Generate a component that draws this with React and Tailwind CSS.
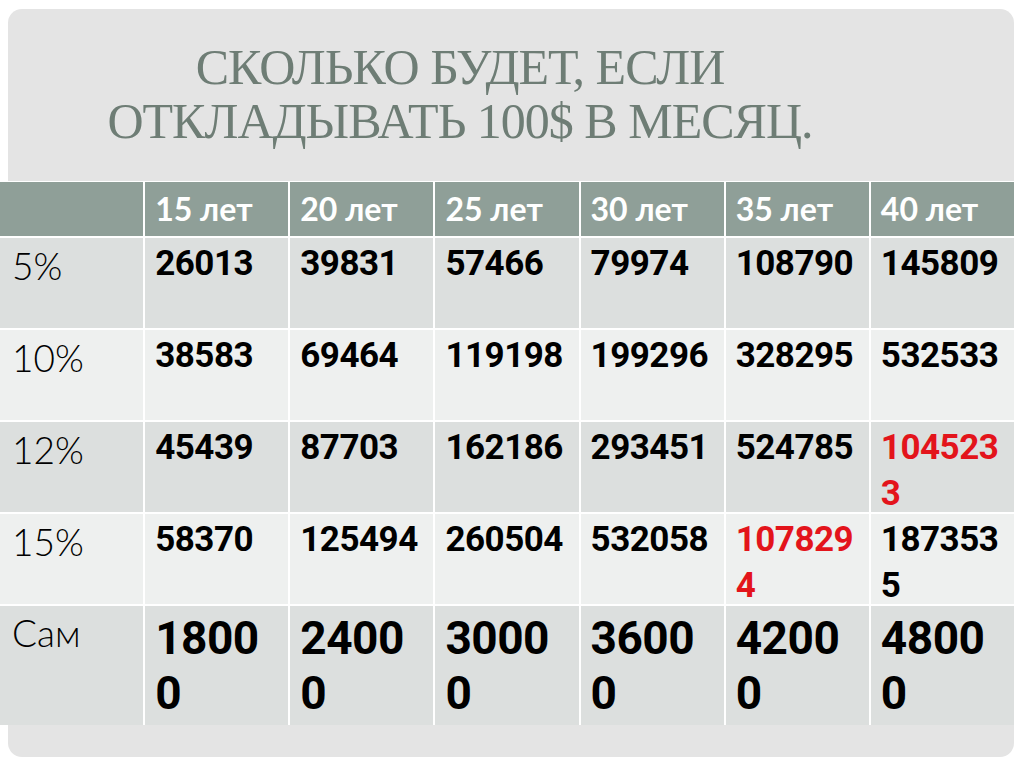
import React from "react";

const years = ["15 лет", "20 лет", "25 лет", "30 лет", "35 лет", "40 лет"];
const rows = [
  { label: "5%", vals: ["26013", "39831", "57466", "79974", "108790", "145809"], red: [], dark: true },
  { label: "10%", vals: ["38583", "69464", "119198", "199296", "328295", "532533"], red: [], dark: false },
  { label: "12%", vals: ["45439", "87703", "162186", "293451", "524785", "1045233"], red: [5], dark: true },
  { label: "15%", vals: ["58370", "125494", "260504", "532058", "1078294", "1873535"], red: [4], dark: false },
];
const sam = ["18000", "24000", "30000", "36000", "42000", "48000"];

export default function App() {
  return (
    <div className="w-[1024px] h-[767px] bg-white overflow-hidden pt-[9px] pl-[8px]">
      <div className="w-[1006px] h-[748px] rounded-[14px] bg-[#e4e4e4] flex flex-col">
        <div className="h-[172px] pr-[102px] pt-[31px] flex flex-col items-center text-[#6e7d75] text-[50px] leading-[54px] tracking-[-1px] font-['Liberation_Serif','DejaVu_Serif',serif]">
          <div>СКОЛЬКО БУДЕТ, ЕСЛИ</div>
          <div>ОТКЛАДЫВАТЬ 100$ В МЕСЯЦ.</div>
        </div>
        <div className="-ml-[8px] w-[1014px] grid grid-cols-7 gap-[2px] bg-white border-t border-white grid-rows-[54px_90px_90px_90px_90px_119px]">
          <div className="bg-[#8f9f98]" />
          {years.map((y) => (
            <div key={y} className="bg-[#8f9f98] text-white text-[32px] font-bold pl-[10px] flex items-center font-['Lato','Open_Sans','Liberation_Sans',sans-serif]">
              {y}
            </div>
          ))}
          {rows.map((r) => (
            <React.Fragment key={r.label}>
              <div className={`${r.dark ? "bg-[#dcdfde]" : "bg-[#eef0ef]"} pl-[12px] pt-[5px] text-[37px] leading-[46px] font-light text-black font-['Lato','Open_Sans','Liberation_Sans',sans-serif]`}>
                {r.label}
              </div>
              {r.vals.map((v, i) => (
                <div
                  key={i}
                  className={`${r.dark ? "bg-[#dcdfde]" : "bg-[#eef0ef]"} px-[10px] pt-[3px] text-[35px] leading-[46px] font-bold tracking-[-0.5px] break-all font-['Roboto','Liberation_Sans',sans-serif] ${r.red.includes(i) ? "text-[#e3141b]" : "text-black"}`}
                >
                  {v}
                </div>
              ))}
            </React.Fragment>
          ))}
          <div className="bg-[#dcdfde] pl-[12px] pt-[4px] text-[37px] leading-[46px] font-light text-black font-['Lato','Open_Sans','Liberation_Sans',sans-serif]">
            Сам
          </div>
          {sam.map((v, i) => (
            <div key={i} className="bg-[#dcdfde] px-[10px] pt-[5px] text-[46px] leading-[55px] font-bold tracking-[-0.5px] break-all text-black font-['Roboto','Liberation_Sans',sans-serif]">
              {v}
            </div>
          ))}
        </div>
      </div>
    </div>
  );
}
